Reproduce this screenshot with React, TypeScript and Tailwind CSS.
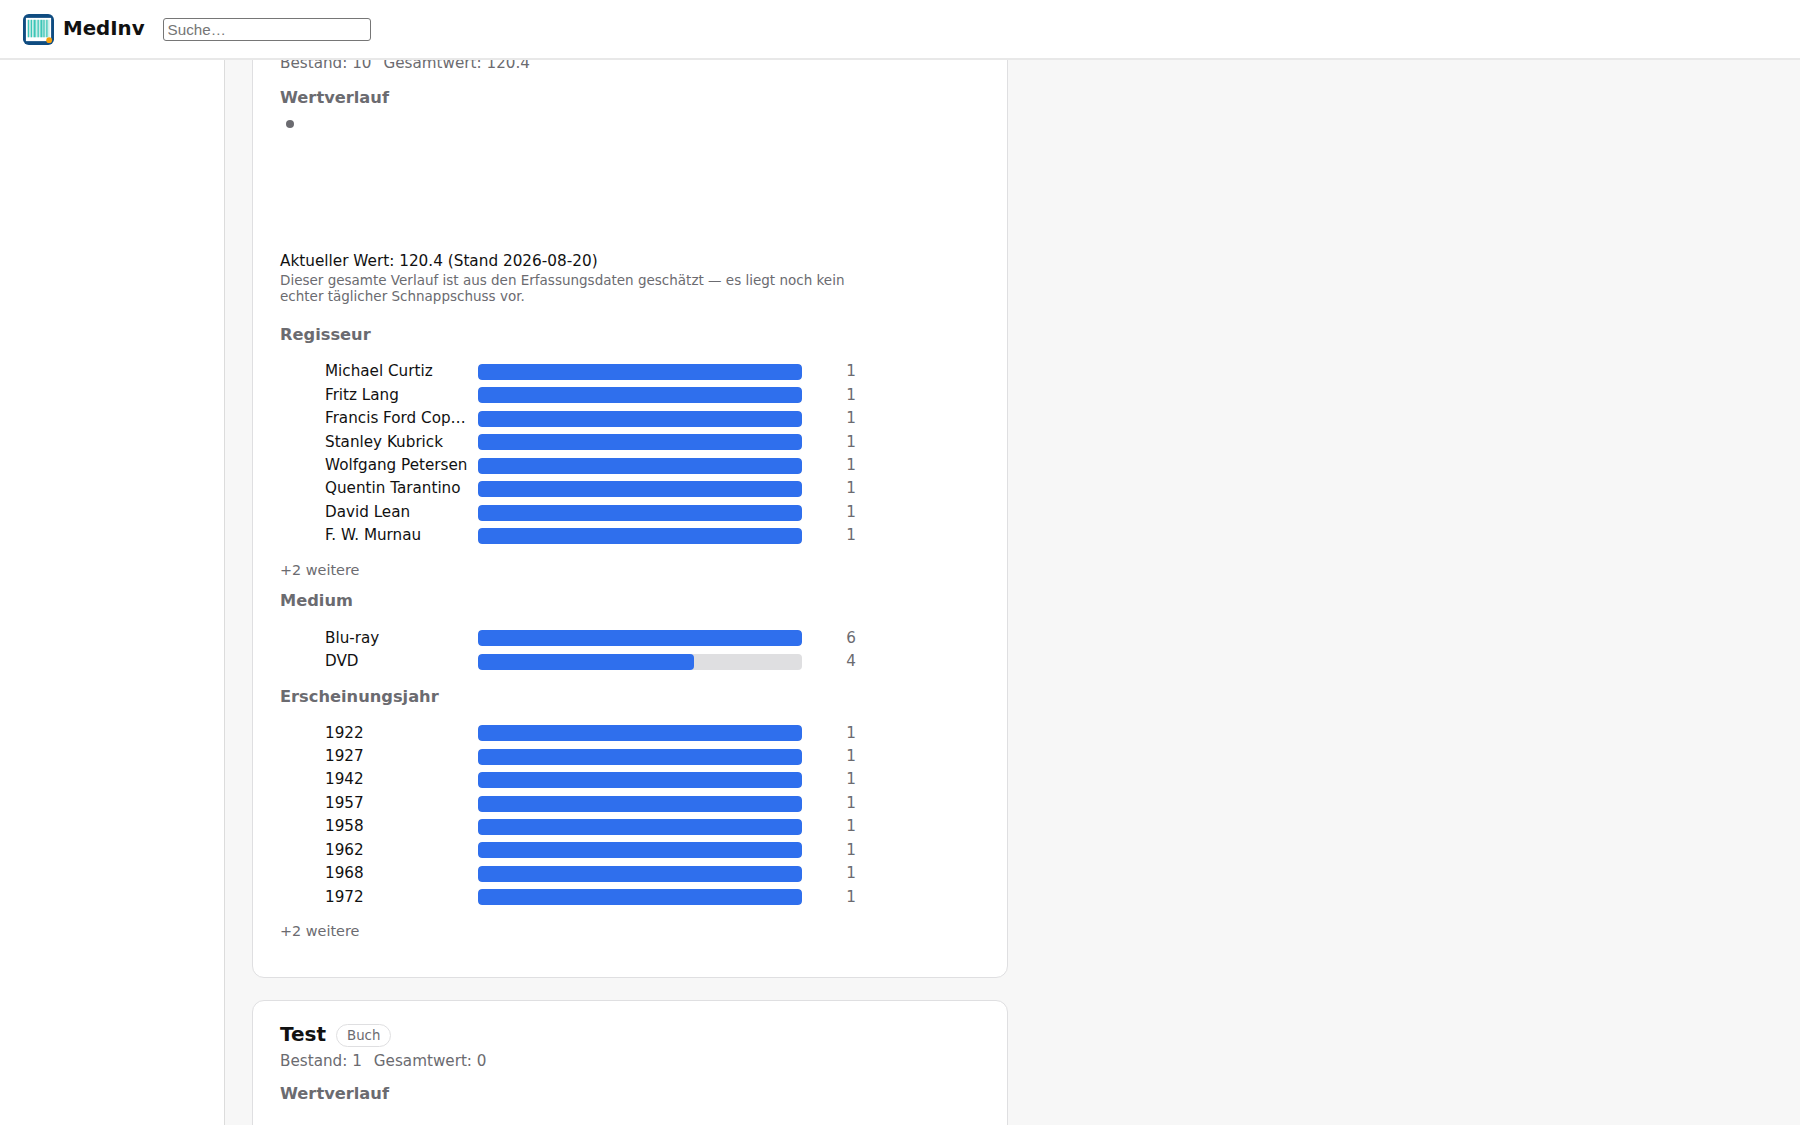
const directors = ["Michael Curtiz","Fritz Lang","Francis Ford Coppola","Stanley Kubrick","Wolfgang Petersen","Quentin Tarantino","David Lean","F. W. Murnau"];
const years = ["1922","1927","1942","1957","1958","1962","1968","1972"];

function Row({ label, value, pct }: { label: string; value: number; pct: number }) {
  return (
    <div className="grid grid-cols-[148px_324px_1fr] items-center gap-x-[5px] h-[19.45px] text-[15.2px] leading-[19.45px]">
      <span className="truncate text-[#111]">{label}</span>
      <span className="h-4 rounded-[4px] bg-[#dfdfe1] overflow-hidden block">
        <span className="block h-full rounded-[4px] bg-[#2f6fed]" style={{ width: `${pct}%` }} />
      </span>
      <span className="text-right text-[#6b6b70] pr-[1px] w-[50px]">{value}</span>
    </div>
  );
}

function Bars({ rows }: { rows: { label: string; value: number; pct: number }[] }) {
  return (
    <div className="pl-[45px] flex flex-col gap-1 w-[620px]">
      {rows.map((r) => <Row key={r.label} {...r} />)}
    </div>
  );
}

function H({ children, className = "" }: { children: string; className?: string }) {
  return <h3 className={`text-[16.25px] leading-5 font-bold text-[#6b6b70] ${className}`}>{children}</h3>;
}

function Stats({ stock, total, className = "" }: { stock: number; total: string; className?: string }) {
  return (
    <p className={`flex gap-3 text-[15.2px] leading-5 text-[#6b6b70] ${className}`}>
      <span>Bestand: {stock}</span>
      <span>Gesamtwert: {total}</span>
    </p>
  );
}

export default function App() {
  return (
    <div className="h-[1125px] overflow-hidden bg-white text-[#111] font-['DejaVu_Sans',sans-serif] flex flex-col">
      <header className="relative z-10 h-[60px] shrink-0 bg-white border-b-2 border-[#e8e8e8] flex items-center pl-[23px]">
        <svg width="31" height="31" viewBox="0 0 32 32" className="shrink-0">
          <rect x="0" y="0" width="32" height="32" rx="6" fill="#0f4c81" />
          <rect x="3" y="4" width="26" height="24" fill="#ffffff" />
          <rect x="4.5" y="6" width="23" height="18" fill="#cdeee9" />
          {[5, 8, 11, 15, 18, 21, 24].map((x) => (
            <rect key={x} x={x} y="6" width={x === 11 || x === 18 ? 2 : 1.3} height="18" fill="#3cc6b7" />
          ))}
          <circle cx="27" cy="27" r="3" fill="#f59e0b" />
        </svg>
        <span className="ml-[9px] text-[19.8px] font-bold leading-6 text-[#111]">MedInv</span>
        <input
          placeholder="Suche…"
          className="ml-[18px] w-[208px] h-[23px] px-[4px] rounded-[3px] border border-[#767676] bg-white text-[15.2px] font-['Liberation_Sans',sans-serif] placeholder:text-[#757575] outline-none"
        />
      </header>
      <div className="flex flex-1 min-h-0">
        <aside className="w-[225px] shrink-0 bg-white border-r border-[#dcdcdc]" />
        <main className="flex-1 min-w-0 bg-[#f7f7f7] pl-[27px] overflow-hidden">
          <section className="w-[756px] -mt-[20px] h-[938px] bg-white border border-[#dfdfe1] rounded-xl px-[27px]">
            <Stats stock={10} total="120.4" className="mt-[12px]" />
            <H className="mt-[15px]">Wertverlauf</H>
            <ul className="list-disc pl-[28px] mt-[5px] h-[137px] text-[#6b6b70] text-[15px] leading-5 marker:text-[25px]"><li /></ul>
            <p className="text-[15.28px] leading-[22px] mb-[1px] text-[#111]">Aktueller Wert: 120.4 (Stand 2026-08-20)</p>
            <p className="text-[13.5px] leading-[15.6px] text-[#6b6b70] w-[570px]">Dieser gesamte Verlauf ist aus den Erfassungsdaten geschätzt — es liegt noch kein echter täglicher Schnappschuss vor.</p>
            <H className="mt-[21px] mb-[17px]">Regisseur</H>
            <Bars rows={directors.map((label) => ({ label, value: 1, pct: 100 }))} />
            <p className="text-[14.4px] leading-5 text-[#6b6b70] mt-[14px]">+2 weitere</p>
            <H className="mt-[11px] mb-[18px]">Medium</H>
            <Bars rows={[{ label: "Blu-ray", value: 6, pct: 100 }, { label: "DVD", value: 4, pct: 66.67 }]} />
            <H className="mt-[15px] mb-[17px]">Erscheinungsjahr</H>
            <Bars rows={years.map((label) => ({ label, value: 1, pct: 100 }))} />
            <p className="text-[14.4px] leading-5 text-[#6b6b70] mt-[14px]">+2 weitere</p>
          </section>
          <section className="w-[756px] mt-[22px] h-[300px] bg-white border border-[#dfdfe1] rounded-xl px-[27px] pt-[20px]">
            <div className="flex items-center gap-[10px]">
              <h2 className="text-[20px] leading-6 font-bold text-[#111]">Test</h2>
              <span className="text-[13.3px] leading-[21px] text-[#6b6b70] border border-[#dfdfe1] rounded-full px-[10px] mt-[3px]">Buch</span>
            </div>
            <Stats stock={1} total="0" className="mt-[4px]" />
            <H className="mt-[13px]">Wertverlauf</H>
          </section>
        </main>
      </div>
    </div>
  );
}
